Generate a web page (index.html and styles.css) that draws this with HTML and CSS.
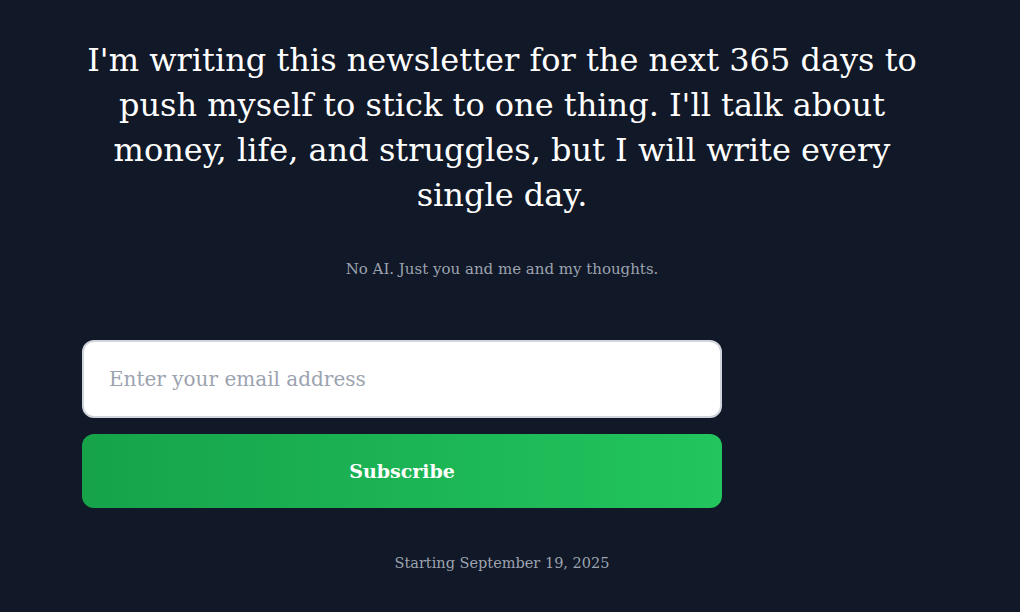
FILE: index.html
```html
<!DOCTYPE html>
<html lang="en">
<head>
<meta charset="utf-8">
<title>365 Days Newsletter</title>
<link rel="stylesheet" href="styles.css">
</head>
<body>
<main class="page">
  <h1 class="intro">I'm writing this newsletter for the next 365 days to push myself to stick to one thing. I'll talk about money, life, and struggles, but I will write every single day.</h1>
  <p class="tagline">No AI. Just you and me and my thoughts.</p>
  <form class="signup" onsubmit="return false;">
    <input class="email" type="email" placeholder="Enter your email address">
    <button class="subscribe" type="submit">Subscribe</button>
  </form>
  <p class="start">Starting September 19, 2025</p>
</main>
</body>
</html>
```

FILE: styles.css
```css
html, body {
  margin: 0;
  padding: 0;
  background: #111827;
  height: 100%;
}
body {
  font-family: "DejaVu Serif", "Liberation Serif", serif;
  color: #ffffff;
}
.page {
  width: 840px;
  margin-left: 82px;
  padding-top: 38px;
  text-align: center;
}
.intro {
  margin: 0;
  font-size: 32px;
  line-height: 45px;
  font-weight: 400;
  color: #ffffff;
}
.tagline {
  margin: 39px 0 0;
  font-size: 15px;
  line-height: 24px;
  color: #9ca3af;
}
.signup {
  width: 640px;
  margin-top: 59px;
  display: flex;
  flex-direction: column;
  gap: 16px;
}
.email {
  box-sizing: border-box;
  height: 78px;
  width: 100%;
  padding: 0 25px;
  border: 2px solid #d1d5db;
  border-radius: 12px;
  background: #ffffff;
  font-family: inherit;
  font-size: 20px;
  color: #111827;
  outline: none;
}
.email::placeholder {
  color: #9ca3af;
}
.subscribe {
  height: 74px;
  width: 100%;
  border: 0;
  border-radius: 12px;
  background: linear-gradient(90deg, #16a34a, #22c55e);
  font-family: inherit;
  font-size: 19px;
  font-weight: 700;
  color: #ffffff;
  cursor: pointer;
}
.start {
  margin: 43px 0 0;
  font-size: 14.5px;
  line-height: 24px;
  color: #9ca3af;
}
```
